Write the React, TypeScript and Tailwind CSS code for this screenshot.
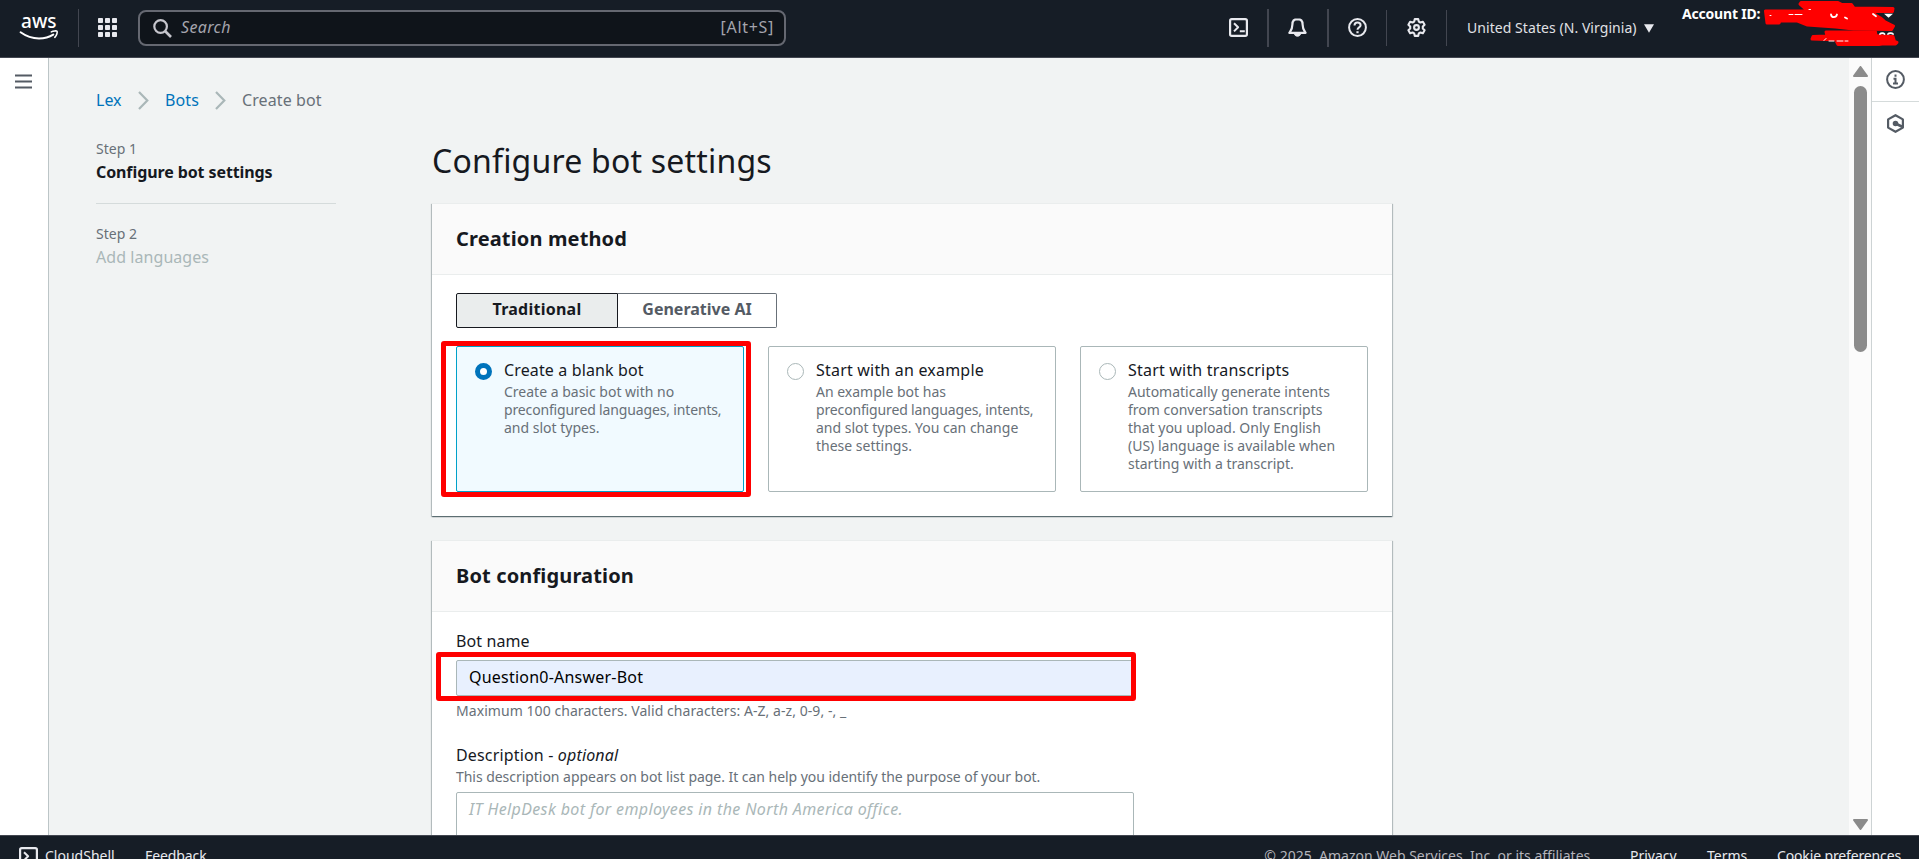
import type { ReactNode } from "react";

const methods = [
  {
    title: "Create a blank bot",
    lines: ["Create a basic bot with no", "preconfigured languages, intents,", "and slot types."],
    selected: true,
    tracking: "tracking-[0.13px]",
  },
  {
    title: "Start with an example",
    lines: ["An example bot has", "preconfigured languages, intents,", "and slot types. You can change", "these settings."],
    selected: false,
    tracking: "tracking-[0.2px]",
  },
  {
    title: "Start with transcripts",
    lines: [
      "Automatically generate intents",
      "from conversation transcripts",
      "that you upload. Only English",
      "(US) language is available when",
      "starting with a transcript.",
    ],
    selected: false,
    tracking: "tracking-[0.2px]",
  },
];

function AwsLogo() {
  return (
    <svg width="40" height="28" viewBox="0 0 40 28" className="shrink-0 overflow-visible">
      <text x="1" y="14.3" textLength="35.5" lengthAdjust="spacingAndGlyphs" fontFamily="Noto Sans, sans-serif" fontSize="20.5" fontWeight="500" fill="#fff">
        aws
      </text>
      <path d="M0.6 18.3C6 22.2 12.5 24.4 19 24.4c5 0 10.300-1.300 14.300-3.800" fill="none" stroke="#fff" strokeWidth="2" strokeLinecap="round" />
      <path d="M31.300 17.900c2-1 5-1.300 5.700-.6.600.8-.3 4.200-2.200 6" fill="none" stroke="#fff" strokeWidth="1.600" strokeLinecap="round" strokeLinejoin="round" />
    </svg>
  );
}

function GridIcon() {
  const steps = [0, 7, 14];
  return (
    <svg width="19" height="19" viewBox="0 0 19 19" fill="#e8e9ee">
      {steps.map((y) => steps.map((x) => <rect key={`${x}-${y}`} x={x} y={y} width="5" height="5" rx="0.8" />))}
    </svg>
  );
}

function ShellIcon() {
  return (
    <svg width="19" height="19" viewBox="0 0 19 19" fill="none" stroke="#e8e9ee" strokeWidth="2.200" strokeLinejoin="round">
      <rect x="1.100" y="1.100" width="16.800" height="16.800" rx="1.600" />
      <path d="M5 5.200l4.100 4.100L5 13.400M10.800 13.300h5" strokeWidth="2" />
    </svg>
  );
}

function BellIcon() {
  return (
    <svg width="19" height="19" viewBox="0 0 19 19" fill="none" stroke="#e8e9ee" strokeWidth="2.200" strokeLinejoin="round">
      <path d="M9.500 1.200c-3.300 0-5.100 2.300-5.100 5.300 0 4.300-1.200 5.500-3 8.300h16.200c-1.800-2.800-3-4-3-8.300 0-3-1.800-5.300-5.100-5.300z" />
      <path d="M6.300 15.300c0 1.800 1.400 2.900 3.200 2.900s3.200-1.100 3.200-2.900z" fill="#e8e9ee" strokeWidth="1" />
    </svg>
  );
}

function HelpIcon() {
  return (
    <svg width="19" height="19" viewBox="0 0 19 19" fill="none" stroke="#e8e9ee" strokeWidth="2">
      <circle cx="9.500" cy="9.500" r="8.400" />
      <path d="M6.500 7.600c0-1.900 1.300-3 3-3s3.100 1.100 3.100 2.700c0 2.200-3.100 2.100-3.100 4.500" />
      <path d="M9.500 13.200v2" strokeWidth="2.200" />
    </svg>
  );
}

function GearIcon() {
  return (
    <svg width="19" height="19" viewBox="0 0 19 19" fill="none" stroke="#e8e9ee" strokeWidth="2.100" strokeLinejoin="round">
      <path d="M7.800 1.100h3.400l.6 2.500 1.600.9 2.500-.7 1.700 2.900-1.800 1.800v2l1.800 1.800-1.700 2.900-2.500-.7-1.600.9-.6 2.500H7.800l-.6-2.500-1.600-.9-2.500.7-1.700-2.900 1.800-1.800v-2L1.400 6.700l1.700-2.900 2.500.7 1.600-.9z" />
      <circle cx="9.500" cy="9.500" r="2.400" />
    </svg>
  );
}

function Crumb() {
  return (
    <svg width="11" height="19" viewBox="0 0 11 19" fill="none" stroke="#aab7b8" strokeWidth="2.200">
      <path d="M1 1l8.300 8.500L1 18" />
    </svg>
  );
}

function Scribble() {
  return (
    <svg width="169" height="57" viewBox="0 0 169 57" className="absolute right-0 top-0" strokeLinecap="round" strokeLinejoin="round">
      <g fill="#ff0000" stroke="#ff0000" strokeWidth="3">
        <path d="M15.500 11H58l-8-7 1-1.500H88l4 2h9.500l2.500 3.500 39 .5-.5 3h-16l-5 1 9 5.500 4 3.500 9 4.500-2 3.500-38-.5-18-2-28-2-10-4H30l-1 2H17z" />
        <path d="M76 32h49.500l.5 3.500 17 1 1.500 5 2.500 1-1.500 1.500H132l-3 .5H88l-1.500-3 5-1.500-29.500-1 1-2.500 14-.5z" />
      </g>
      <g fill="none" stroke="#fff" strokeWidth="1">
        <path d="M20 15.500h1M39 14.500h4M45 14.500h7M59 9.500h1.500M74 40.500l2-2M79 41h5M87 41h6M95 41h3" />
        <path d="M81 14.500c.5 3.500 5 3.500 6 0M95 17.500l2 1M123 14l3 2.200M130 34c1-1.200 3.500-1.200 4.500 0M138 34c1-1.200 4-1.200 5 0" strokeWidth="1.800" />
      </g>
      <path d="M134 13.800h9l-4.500 4z" fill="#fff" />
    </svg>
  );
}

function Header() {
  return (
    <header className="relative flex h-[58px] shrink-0 items-start border-b border-[#424650] bg-[#161d26] text-[#d8dade]">
      <div className="ml-5 mt-3.5 flex w-[58px]">
        <AwsLogo />
      </div>
      <div className="mt-[9px] h-[38px] w-px bg-[#424650]" />
      <div className="ml-[19px] mt-[18px]">
        <GridIcon />
      </div>
      <div className="ml-[21px] mt-2.5 flex h-9 w-[648px] items-center rounded-lg border-2 border-[#656871] bg-[#0f141a] pl-[13px] pr-2.5">
        <svg width="19" height="19" viewBox="0 0 19 19" fill="none" stroke="#c6c6cd" strokeWidth="2.200">
          <circle cx="7.600" cy="7.500" r="6.300" />
          <path d="M12 12l6 6" strokeWidth="2.600" />
        </svg>
        <span className="-mt-0.5 ml-[9px] text-[16px] italic leading-6 tracking-[0.35px] text-[#a4a4ad]">Search</span>
        <span className="-mt-0.5 ml-auto text-[16px] leading-6 tracking-[0.7px] text-[#a4a4ad]">[Alt+S]</span>
      </div>
      <div className="ml-[443px] mt-[18px]">
        <ShellIcon />
      </div>
      <div className="ml-[19px] mt-[9px] h-[38px] w-0.5 bg-[#424650]" />
      <div className="ml-[19px] mt-[18px]">
        <BellIcon />
      </div>
      <div className="ml-5 mt-[9px] h-[38px] w-0.5 bg-[#424650]" />
      <div className="ml-[19px] mt-[18px]">
        <HelpIcon />
      </div>
      <div className="ml-[19px] mt-2.5 h-9 w-px bg-[#424650]" />
      <div className="ml-5 mt-[18px]">
        <GearIcon />
      </div>
      <div className="ml-5 mt-2.5 h-9 w-px bg-[#424650]" />
      <span className="ml-5 mt-[17px] w-[177px] whitespace-nowrap text-[14px] leading-[22px] tracking-[0.06px] text-[#e0e1e5]">United States (N. Virginia)</span>
      <svg width="10" height="9" viewBox="0 0 10 9" className="mt-6 shrink-0">
        <path d="M0 .3h10L5 8.700z" fill="#e8e9ee" />
      </svg>
      <span className="ml-7 mt-1 whitespace-nowrap text-[14px] font-bold leading-5 tracking-[-0.2px] text-white">Account ID:</span>
      <Scribble />
    </header>
  );
}

function Panel({ title, className, children }: { title: string; className: string; children: ReactNode }) {
  return (
    <section
      className={`w-[960px] border-t border-[#eaeded] bg-white shadow-[0_1px_1px_0_rgba(0,28,36,0.4),1px_1px_1px_0_rgba(0,28,36,0.2),-1px_1px_1px_0_rgba(0,28,36,0.2)] ${className}`}
    >
      <h2 className="h-[71px] border-b border-[#eaeded] bg-[#fafafa] px-6 pt-[21px] text-[20px] font-bold leading-7 tracking-[0.14px] text-[#16191f]">{title}</h2>
      <div className="px-6">{children}</div>
    </section>
  );
}

function Radio({ on }: { on: boolean }) {
  return on ? (
    <span className="mt-[5px] size-[17px] shrink-0 rounded-full border-5 border-[#0073bb] bg-white" />
  ) : (
    <span className="mt-[5px] size-[17px] shrink-0 rounded-full border border-[#aab7b8] bg-white" />
  );
}

export default function App() {
  return (
    <div className="flex h-[859px] w-[1919px] flex-col overflow-hidden bg-white text-[#16191f] [font-family:'Noto_Sans',sans-serif]">
      <Header />
      <div className="flex h-[777px] shrink-0 overflow-hidden">
        <aside className="w-[49px] shrink-0 border-r border-[#bcc5c7] bg-white pl-[15px] pt-4">
          <svg width="17" height="15" viewBox="0 0 17 15" stroke="#545b64" strokeWidth="2">
            <path d="M0 1.500h17M0 7.500h17M0 13.500h17" />
          </svg>
        </aside>

        <main className="w-[1800px] shrink-0 bg-[#f1f3f3] pl-[47px] pt-[30px]">
          <nav className="flex h-6 items-center text-[16px] leading-6">
            <a className="w-[42px] text-[#0073bb]">Lex</a>
            <Crumb />
            <a className="ml-4 w-[50px] tracking-[0.1px] text-[#0073bb]">Bots</a>
            <Crumb />
            <span className="ml-4 tracking-[0.1px] text-[#687078]">Create bot</span>
          </nav>
          <div className="flex pt-7">
            <div className="w-[240px]">
              <div className="h-16 border-b border-[#d5dbdb]">
                <p className="text-[14px] leading-[18px] text-[#687078]">Step 1</p>
                <p className="mt-0.5 text-[16px] font-bold leading-6 tracking-[-0.1px]">Configure bot settings</p>
              </div>
              <p className="mt-[21px] text-[14px] leading-[18px] text-[#687078]">Step 2</p>
              <p className="mt-0.5 text-[16px] leading-6 tracking-[0.06px] text-[#aab7b8]">Add languages</p>
            </div>

            <div className="ml-24">
              <h1 className="mt-px text-[32px] leading-10 tracking-[0.2px]">Configure bot settings</h1>
              <Panel title="Creation method" className="mt-[22px] h-[313px]">
                <div className="mt-[18px] flex h-[35px] w-[321px] text-[16px] font-bold leading-6">
                  <div className="flex w-[162px] justify-center rounded-l-xs border border-[#16191f] bg-[#eaeded] pt-[3px] tracking-[0.25px]">Traditional</div>
                  <div className="flex flex-1 justify-center rounded-r-xs border border-l-0 border-[#687078] pt-[3px] text-[#545b64]">Generative AI</div>
                </div>
                <div className="mt-[18px] flex gap-6">
                  {methods.map((m) => (
                    <div
                      key={m.title}
                      className={`relative flex h-[146px] w-[288px] gap-3 rounded-xs border pl-[18px] pt-[11px] ${
                        m.selected ? "border-[#00a1c9] bg-[#f1faff]" : "border-[#aab7b8] bg-white"
                      }`}
                    >
                      <Radio on={m.selected} />
                      <div>
                        <p className={`text-[16px] leading-6 ${m.tracking}`}>{m.title}</p>
                        <p className="mt-px whitespace-nowrap text-[14px] leading-[18px] text-[#687078]">
                          {m.lines.map((l) => (
                            <span key={l} className={l.startsWith("preconfigured") ? "block tracking-[-0.15px]" : "block"}>
                              {l}
                            </span>
                          ))}
                        </p>
                      </div>
                      {m.selected && <div className="absolute -left-4 -top-1.5 h-[156px] w-[310px] rounded-[3px] border-5 border-[#ff0000]" />}
                    </div>
                  ))}
                </div>
              </Panel>

              <Panel title="Bot configuration" className="mt-6 h-[420px]">
                <p className="pt-[17px] text-[16px] leading-6 tracking-[0.1px]">Bot name</p>
                <div className="relative mt-[7px] h-9 w-[678px] rounded-xs border border-[#aab7b8] bg-[#e8f0fe] pl-3 pt-1 text-[16px] leading-6 tracking-[0.22px] text-black">
                  Question0-Answer-Bot
                  <div className="absolute -left-[21px] -top-[9px] h-[49px] w-[700px] rounded-[3px] border-5 border-[#ff0000]" />
                </div>
                <p className="mt-1.5 text-[14px] leading-[18px] tracking-[0.06px] text-[#687078]">Maximum 100 characters. Valid characters: A-Z, a-z, 0-9, -, _</p>
                <p className="mt-[23px] text-[16px] leading-6 tracking-[0.16px]">
                  Description - <i>optional</i>
                </p>
                <p className="mt-px text-[14px] leading-[18px] tracking-[-0.04px] text-[#687078]">
                  This description appears on bot list page. It can help you identify the purpose of your bot.
                </p>
                <div className="mt-1.5 h-24 w-[678px] rounded-xs border border-[#aab7b8] bg-white pl-3 pt-1 text-[16px] italic leading-6 tracking-[0.37px] text-[#aab7b8]">
                  IT HelpDesk bot for employees in the North America office.
                </div>
              </Panel>
            </div>
          </div>
        </main>

        <div className="flex w-[22px] shrink-0 flex-col items-center bg-[#fbfbfb] pt-2">
          <svg width="15" height="11" viewBox="0 0 15 11" fill="#8b8b8b" stroke="#8b8b8b" strokeLinejoin="round" strokeWidth="2">
            <path d="M7.500 1L14 10H1z" />
          </svg>
          <div className="mt-[9px] h-[266px] w-[13px] rounded-full bg-[#8b8b8b]" />
          <svg width="15" height="11" viewBox="0 0 15 11" className="mb-[5px] mt-auto" fill="#8b8b8b" stroke="#8b8b8b" strokeLinejoin="round" strokeWidth="2">
            <path d="M7.500 10L14 1H1z" />
          </svg>
        </div>

        <aside className="flex w-12 shrink-0 flex-col items-center border-l border-[#cdd3d4] bg-white">
          <div className="flex h-11 w-full justify-center border-b border-[#d5dbdb] pt-3">
            <svg width="19" height="19" viewBox="0 0 19 19" fill="none" stroke="#545b64" strokeWidth="2">
              <circle cx="9.500" cy="9.500" r="8.400" />
              <path d="M9.500 4.600v2.200M7.500 8.800h2v5M7 13.600h5" />
            </svg>
          </div>
          <svg width="19" height="19" viewBox="0 0 19 19" className="mt-3" fill="none" stroke="#545b64" strokeWidth="2.200">
            <path d="M9.500 1.200l7.400 4.200v8.200l-7.400 4.200-7.400-4.200V5.400z" strokeLinejoin="round" />
            <path d="M9.500 9.500l6.800 3.200" strokeWidth="2.600" />
            <circle cx="9.500" cy="9.500" r="1.700" fill="#545b64" />
          </svg>
        </aside>
      </div>

      <footer className="flex h-[40px] shrink-0 items-start whitespace-nowrap border-t border-[#424650] bg-[#161d26] text-[14px] leading-5 text-[#e8e9ee]">
        <div className="ml-[19px] mt-[11px]">
          <ShellIcon />
        </div>
        <span className="ml-[7px] mt-2.5 w-[100px]">CloudShell</span>
        <span className="mt-2.5 tracking-[-0.1px]">Feedback</span>
        <div className="ml-auto mr-[18px] mt-2.5 flex">
          <span className="mr-9 text-[#b4b4bb]">© 2025, Amazon Web Services, Inc. or its affiliates.</span>
          <span className="w-[77px]">Privacy</span>
          <span className="w-[70px]">Terms</span>
          <span className="w-[124px] tracking-[-0.14px]">Cookie preferences</span>
        </div>
      </footer>
    </div>
  );
}
